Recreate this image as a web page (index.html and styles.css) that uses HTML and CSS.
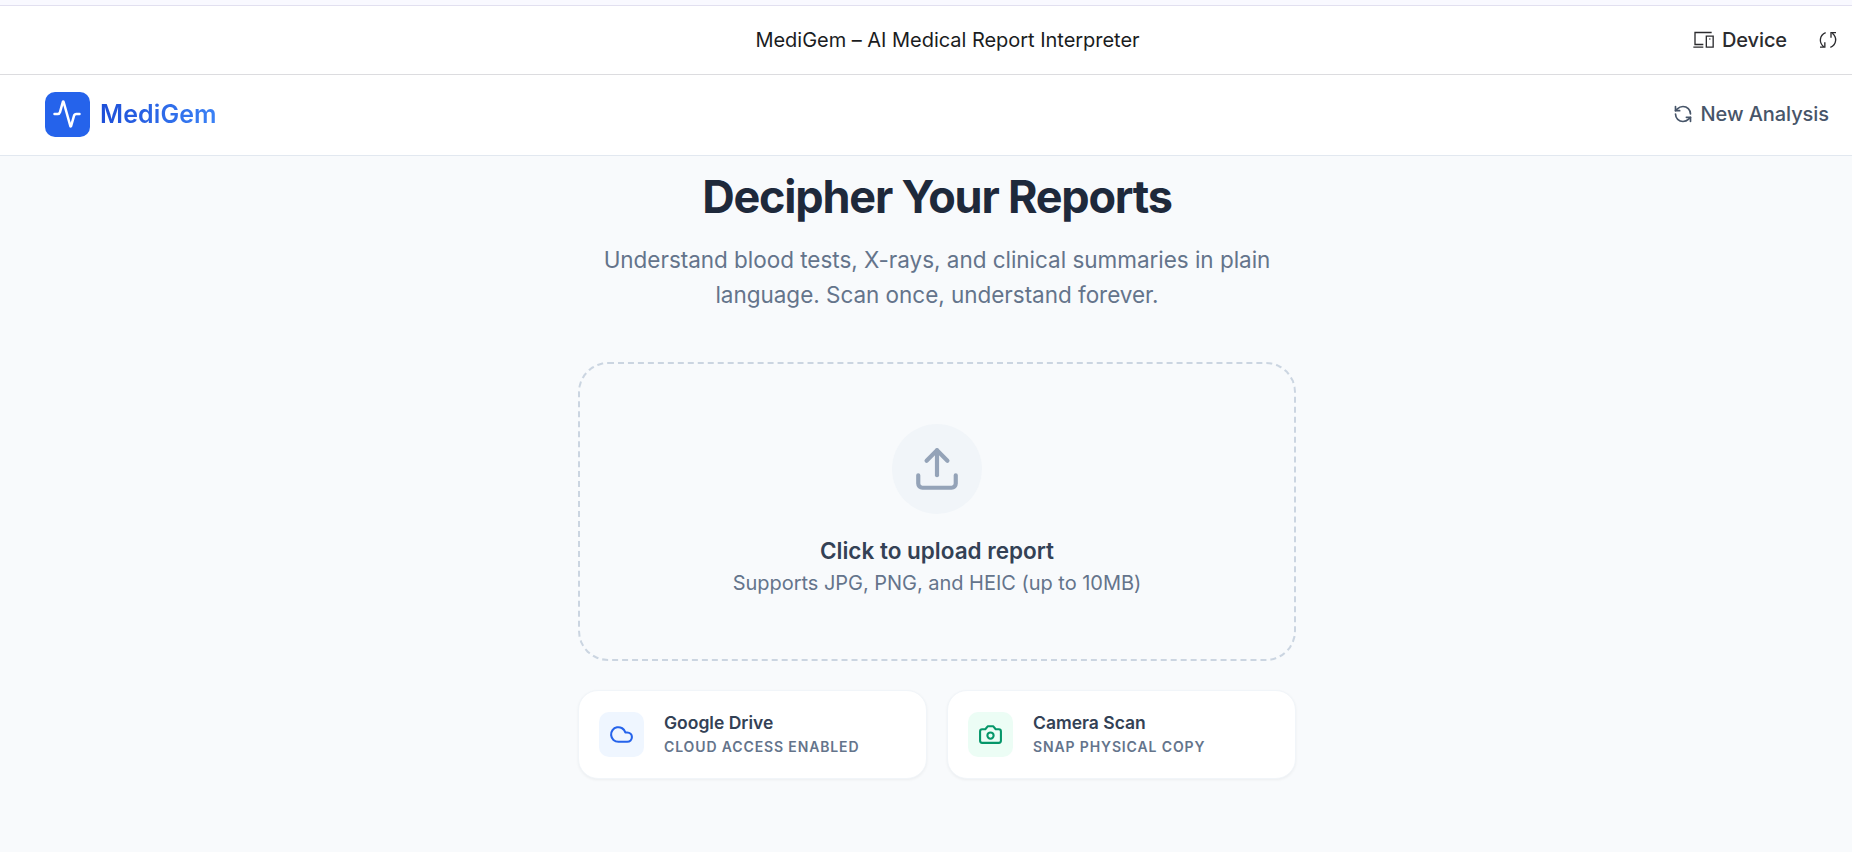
FILE: index.html
```html
<!DOCTYPE html>
<html lang="en">
  <head>
    <meta charset="UTF-8" />
    <meta name="viewport" content="width=device-width, initial-scale=1.0" />
    <title>MediGem – AI Medical Report Interpreter</title>
    <link rel="stylesheet" href="styles.css">
  </head>
  <body>
    <div class="preview-bar">
      <div class="preview-title">MediGem – AI Medical Report Interpreter</div>
      <div class="preview-actions">
        <button class="device-btn">
          <svg class="device-icon" viewBox="0 0 63 54">
            <path d="M56 4.500H6V40.500H31M1 48.500H31M40 15.500H60.500V48.500H40Z" />
            <path d="M49 24h3" />
          </svg>
          Device
        </button>
        <button class="sync-btn" aria-label="Reload">
          <svg class="sync-icon" viewBox="0 0 54 54">
            <path d="M20 5C1 13-1 35 14 47M3 48.500H17.500V34" />
            <path d="M34 49C53 41 55 19 40 7M51 5H36V20" />
          </svg>
        </button>
      </div>
    </div>

    <header class="header">
      <div class="brand">
        <div class="logo">
          <svg class="icon" viewBox="0 0 24 24">
            <path d="M22 12h-2.480a2 2 0 0 0-1.930 1.460l-2.350 8.360a.25.25 0 0 1-.48 0L9.240 2.180a.25.25 0 0 0-.48 0l-2.350 8.360A2 2 0 0 1 4.490 12H2" />
          </svg>
        </div>
        <span class="brand-name">MediGem</span>
      </div>
      <button class="new-analysis">
        <svg class="icon" viewBox="0 0 24 24">
          <path d="M21 12a9 9 0 0 0-9-9 9.750 9.750 0 0 0-6.740 2.740L3 8" />
          <path d="M3 3v5h5" />
          <path d="M3 12a9 9 0 0 0 9 9 9.750 9.750 0 0 0 6.740-2.740L21 16" />
          <path d="M16 16h5v5" />
        </svg>
        New Analysis
      </button>
    </header>

    <main class="main">
      <h1>Decipher Your Reports</h1>
      <p class="intro">Understand blood tests, X-rays, and clinical summaries in plain<br>language. Scan once, understand forever.</p>

      <div class="upload-box">
        <div class="upload-circle">
          <svg class="icon" viewBox="0 0 24 24">
            <path d="M21 15v4a2 2 0 0 1-2 2H5a2 2 0 0 1-2-2v-4" />
            <path d="M17 8l-5-5-5 5" />
            <path d="M12 3v12" />
          </svg>
        </div>
        <div class="upload-title">Click to upload report</div>
        <div class="upload-hint">Supports JPG, PNG, and HEIC (up to 10MB)</div>
      </div>

      <div class="sources">
        <div class="source-card">
          <div class="source-icon drive">
            <svg class="icon" viewBox="0 0 24 24">
              <path d="M17.500 19H9a7 7 0 1 1 6.710-9h1.790a4.500 4.500 0 1 1 0 9Z" />
            </svg>
          </div>
          <div>
            <div class="source-name">Google Drive</div>
            <div class="source-note">CLOUD ACCESS ENABLED</div>
          </div>
        </div>
        <div class="source-card">
          <div class="source-icon camera">
            <svg class="icon" viewBox="0 0 24 24">
              <path d="M14.500 4h-5L7 7H4a2 2 0 0 0-2 2v9a2 2 0 0 0 2 2h16a2 2 0 0 0 2-2V9a2 2 0 0 0-2-2h-3l-2.500-3z" />
              <circle cx="12" cy="13" r="3" />
            </svg>
          </div>
          <div>
            <div class="source-name">Camera Scan</div>
            <div class="source-note">SNAP PHYSICAL COPY</div>
          </div>
        </div>
      </div>
    </main>
  </body>
</html>
```
FILE: styles.css
```css
* {
  box-sizing: border-box;
}
html {
  overflow: hidden;
  background: #f8fafc;
}
body {
  margin: 0;
  width: 1874px;
  min-height: 100vh;
  font-family: Inter, "Liberation Sans", sans-serif;
  font-size: 20px;
  line-height: 30px;
  color: #1e293b;
}
button {
  display: flex;
  align-items: center;
  padding: 0;
  border: none;
  background: none;
  font: inherit;
  font-weight: 500;
  color: inherit;
}
.icon {
  display: block;
  fill: none;
  stroke: currentColor;
  stroke-width: 2;
  stroke-linecap: round;
  stroke-linejoin: round;
}

/* preview toolbar */
.preview-bar {
  display: grid;
  grid-template-columns: 1fr auto 1fr;
  align-items: center;
  width: 1895px;
  height: 75px;
  border-top: 5px solid #f9f9ff;
  border-bottom: 1px solid #dcdcdf;
  background: #fff;
  box-shadow: inset 0 1px #e2e0f0;
  color: #1a1c1e;
}
.preview-title {
  grid-column: 2;
  letter-spacing: -0.03px;
}
.preview-actions {
  display: flex;
  align-items: center;
  justify-content: flex-end;
  gap: 32px;
  padding-right: 58px;
  color: #2b2b2e;
}
.device-btn {
  gap: 8px;
  letter-spacing: -0.1px;
}
.device-icon,
.sync-icon {
  width: 21px;
  height: 18px;
  fill: none;
  stroke: currentColor;
  stroke-width: 4;
}
.sync-icon {
  width: 18px;
}

/* app header */
.header {
  display: flex;
  align-items: center;
  justify-content: space-between;
  height: 81px;
  padding: 0 45px 2px;
  border-bottom: 1px solid #e2e8f0;
  background: #fff;
}
.brand {
  display: flex;
  align-items: center;
  gap: 10px;
}
.logo {
  display: grid;
  place-items: center;
  width: 45px;
  height: 45px;
  border-radius: 10px;
  background: #2563eb;
  color: #fff;
}
.logo .icon {
  width: 30px;
  height: 30px;
  margin-right: 1px;
}
.brand-name {
  font-size: 25px;
  font-weight: 600;
  line-height: 35px;
  letter-spacing: 0.1px;
  background: linear-gradient(to right, #1d4ed8, #3b82f6);
  -webkit-background-clip: text;
  background-clip: text;
  color: transparent;
}
.new-analysis {
  gap: 8px;
  letter-spacing: -0.07px;
  color: #475569;
}
.new-analysis .icon {
  width: 20px;
  height: 20px;
}

/* upload page */
.main {
  width: 718px;
  margin: 0 auto;
  padding: 16px 0 40px;
  text-align: center;
}
h1 {
  margin: 0 0 20px;
  font-size: 45px;
  font-weight: 700;
  line-height: 50px;
  letter-spacing: -0.027em;
}
.intro {
  margin: 0 0 50px;
  font-size: 22.5px;
  line-height: 35px;
  letter-spacing: -0.03px;
  color: #64748b;
}
.upload-box {
  height: 299px;
  padding: 60px;
  border: 2px dashed #cbd5e1;
  border-radius: 30px;
}
.upload-circle {
  display: grid;
  place-items: center;
  width: 90px;
  height: 90px;
  margin: 0 auto 19px;
  border-radius: 50%;
  background: #f1f5f9;
  color: #94a3b8;
}
.upload-circle .icon {
  width: 50px;
  height: 50px;
}
.upload-title {
  font-size: 22.5px;
  font-weight: 600;
  line-height: 35px;
  color: #334155;
}
.upload-hint {
  letter-spacing: -0.03px;
  color: #64748b;
}
.sources {
  display: grid;
  grid-template-columns: 1fr 1fr;
  gap: 20px;
  margin-top: 29px;
  text-align: left;
}
.source-card {
  display: flex;
  align-items: center;
  gap: 20px;
  height: 89px;
  padding: 0 20px;
  border: 1px solid #f1f5f9;
  border-radius: 20px;
  background: #fff;
  box-shadow: 0 1px 3px rgba(0, 0, 0, 0.05);
}
.source-icon {
  display: grid;
  place-items: center;
  width: 45px;
  height: 45px;
  border-radius: 10px;
}
.source-icon .icon {
  width: 25px;
  height: 25px;
}
.drive {
  background: #eff6ff;
  color: #2563eb;
}
.camera {
  background: #ecfdf5;
  color: #059669;
}
.source-name {
  font-size: 17.5px;
  font-weight: 600;
  line-height: 25px;
  color: #334155;
}
.source-note {
  padding: 1px 0;
  font-size: 14px;
  font-weight: 600;
  line-height: 22px;
  letter-spacing: 0.87px;
  color: #64748b;
}
```
